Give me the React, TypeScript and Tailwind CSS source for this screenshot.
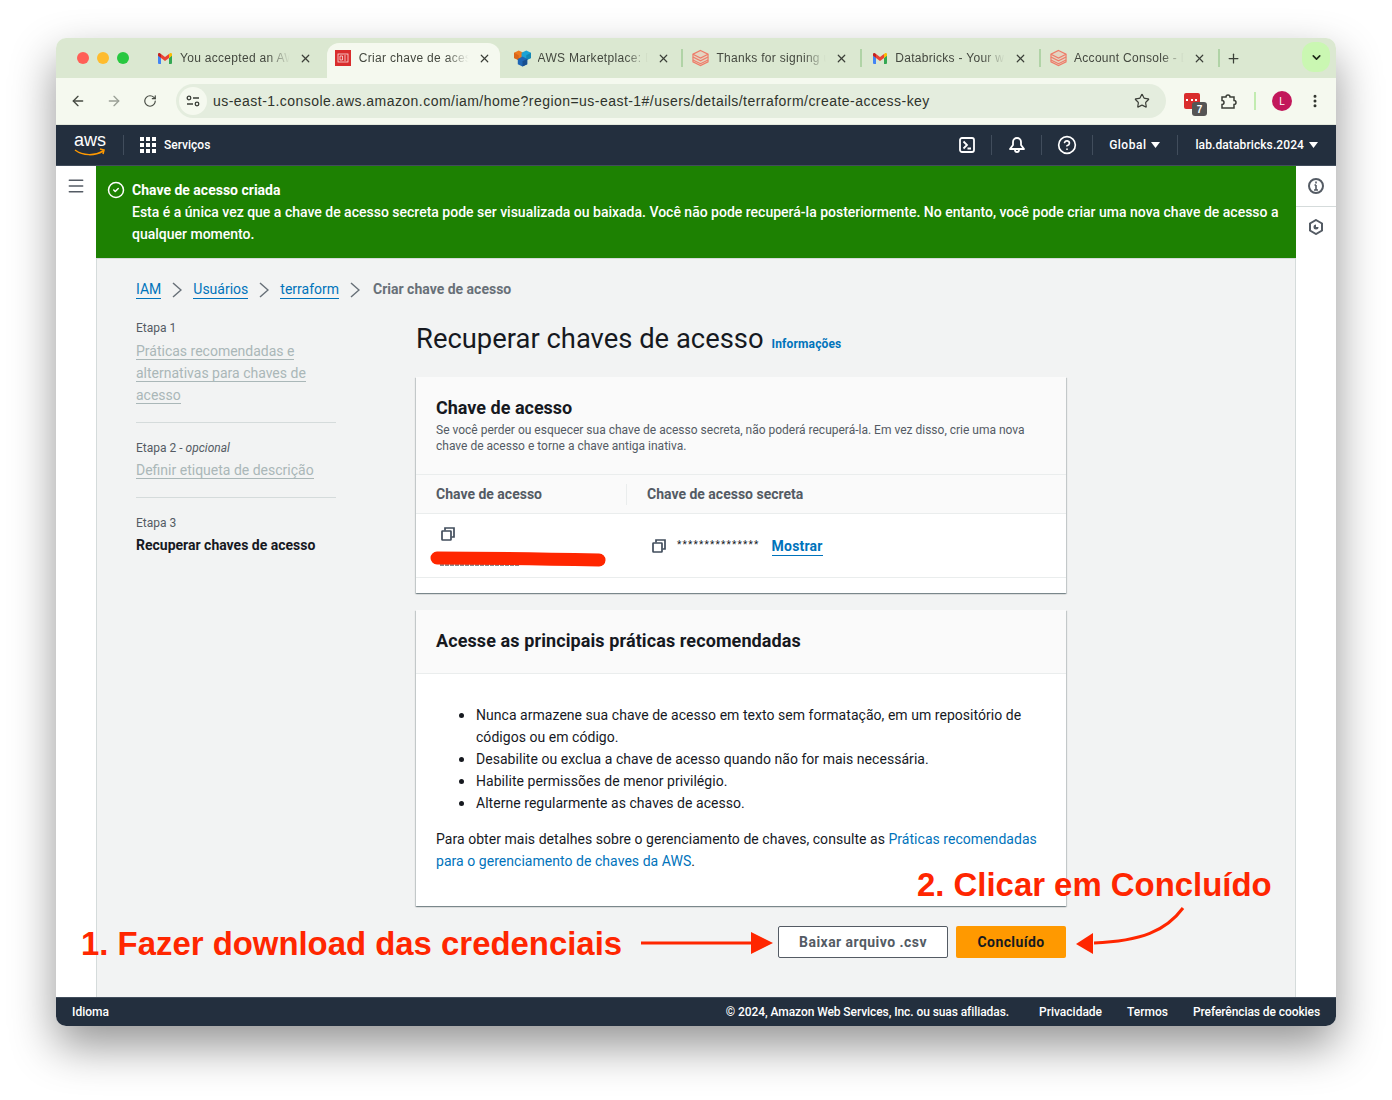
import React from 'react';
import { ArrowLeft, ArrowRight, RotateCw, Star, MoreVertical, X, Plus, ChevronDown, CircleHelp, CircleCheck, Menu } from 'lucide-react';

const GmailIcon = () => (
  <svg width="14" height="11" viewBox="0 0 14 11">
    <path d="M0 2v8a1 1 0 0 0 1 1h2V5z" fill="#4285f4" />
    <path d="M14 2v8a1 1 0 0 1-1 1h-2V5z" fill="#34a853" />
    <path d="M11 1v4l3-2.3V1.300C14 .3 12.800-.3 12 .3z" fill="#fbbc04" />
    <path d="M3 5V1l4 3 4-3v4L7 8z" fill="#ea4335" />
    <path d="M0 1.300v1.400L3 5V1L2 .3C1.200-.3 0 .3 0 1.300z" fill="#c5221f" />
  </svg>
);

const ConsoleIcon = () => (
  <svg width="16" height="16" viewBox="0 0 16 16">
    <rect width="16" height="16" fill="#d92d2d" />
    <rect x="3" y="4" width="10" height="8" fill="none" stroke="#fff" strokeWidth="0.8" opacity="0.85" />
    <path d="M5 6h2.500v4H5zM9 6h2M9 8h2M9 10h2" fill="none" stroke="#fff" strokeWidth="0.8" opacity="0.85" />
  </svg>
);

const MarketplaceIcon = () => (
  <svg width="18" height="18" viewBox="0 0 18 18">
    <path d="M0 3.500L5 1l5 2.500v5.500L5 11.500 0 9z" fill="#ee7a20" />
    <path d="M5 6v5.500L0 9V3.500z" fill="#d9651a" />
    <path d="M8 3.500L13 1l5 2.500v5.500l-5 2.500L8 9z" fill="#1ba3d6" />
    <path d="M13 6v5.500L18 9V3.500z" fill="#1487b5" />
    <path d="M4 10l5-2.500 5 2.500v5.500L9 18l-5-2.500z" fill="#1f66b5" />
    <path d="M9 12.500V18l5-2.500V10z" fill="#184f90" />
  </svg>
);

const StackIcon = () => (
  <svg width="18" height="18" viewBox="0 0 18 18" fill="none" stroke="#ee7b68" strokeWidth="1.200">
    <path d="M9 1l8 4v8l-8 4-8-4V5z" fill="#f6b3a5" fillOpacity="0.35" />
    <path d="M1 5l8 4 8-4" />
    <path d="M1 8l8 4 8-4" />
    <path d="M1 11l8 4 8-4" />
  </svg>
);

const CopyIcon = () => (
  <svg width="14" height="14" viewBox="0 0 14 14" fill="none" stroke="#414d5c" strokeWidth="1.700">
    <rect x="1" y="4" width="9" height="9" rx="0.5" />
    <path d="M4 3.500V1h9v9h-2.500" />
  </svg>
);

const CloudShell = () => (
  <svg width="16" height="16" viewBox="0 0 16 16" fill="none" stroke="#fff" strokeWidth="1.800">
    <rect x="1" y="1" width="14" height="14" rx="2" />
    <path d="M4.500 4.500L8 8l-3.500 3.500M8.500 11.500H12" />
  </svg>
);

const BellIcon = () => (
  <svg width="16" height="16" viewBox="0 0 16 16" fill="none" stroke="#fff" strokeWidth="1.800">
    <path d="M1 12h14L12 8V5a4 4 0 0 0-8 0v3z" strokeLinejoin="round" />
    <path d="M6 12.500v.5a2 2 0 0 0 4 0v-.5" />
  </svg>
);

const tabs = [
  { title: 'You accepted an AWS', icon: <GmailIcon /> },
  { title: 'Criar chave de acesso', icon: <ConsoleIcon />, active: true },
  { title: 'AWS Marketplace: Databricks', icon: <MarketplaceIcon /> },
  { title: 'Thanks for signing up', icon: <StackIcon />, sep: true },
  { title: 'Databricks - Your workspace', icon: <GmailIcon />, sep: true },
  { title: 'Account Console - Databricks', icon: <StackIcon />, sep: true },
];

const Tab = ({ title, icon, active, sep }: { title: string; icon: React.ReactNode; active?: boolean; sep?: boolean }) => (
  <div className="relative flex h-[35px] w-[178.8px] items-center pb-[5px]">
    {sep && <div className="absolute left-[-2px] top-[6px] h-[18px] w-[2px] bg-[#b0d3a6]" />}
    {active && <div className="absolute left-[1px] top-0 h-[35px] w-[173px] rounded-t-xl bg-[#f5f9ef]" />}
    <div className="relative ml-[9px] flex w-[17px] justify-center">{icon}</div>
    <span className="relative ml-[7px] w-[112px] overflow-hidden whitespace-nowrap text-[12px] tracking-[0.3px] text-[#44483f] [mask-image:linear-gradient(to_right,black_78%,transparent_98%)]">
      {title}
    </span>
    <X size={13} strokeWidth={2.2} className="relative ml-[7px] text-[#3b3f38]" />
  </div>
);

const Crumb = ({ children }: { children: React.ReactNode }) => (
  <a className="border-b border-[#0073bb] text-[14px] leading-[18px] text-[#0073bb]">{children}</a>
);

const Chevron = () => (
  <svg width="10" height="16" viewBox="0 0 10 16" fill="none" stroke="#687078" strokeWidth="1.500" className="mx-[11px]">
    <path d="M1 1l8 7-8 7" />
  </svg>
);

const Divider = () => <div className="h-[20px] w-px bg-[#414d5c]" />;

const Caret = () => (
  <svg width="9" height="6" viewBox="0 0 9 6" fill="#fff">
    <path d="M0 0h9L4.500 6z" />
  </svg>
);

const Bullet = ({ children }: { children: React.ReactNode }) => (
  <li className="relative before:absolute before:left-[-17px] before:top-[9px] before:h-[5px] before:w-[5px] before:rounded-full before:bg-[#16191f]">
    {children}
  </li>
);

const Annotations = () => (
  <>
    <span className="absolute left-[25px] top-[886px] whitespace-nowrap font-['Liberation_Sans'] text-[32.9px] font-bold leading-[40px] text-[#ff2600]">
      1. Fazer download das credenciais
    </span>
    <span className="absolute left-[861px] top-[827px] whitespace-nowrap font-['Liberation_Sans'] text-[32.9px] font-bold leading-[40px] text-[#ff2600]">
      2. Clicar em Concluído
    </span>
    <svg className="absolute left-[580px] top-[865px]" width="560" height="60" viewBox="0 0 560 60" fill="none">
      <path d="M5 40H120" stroke="#ff2600" strokeWidth="3" />
      <path d="M137 40L115 29v22z" fill="#ff2600" />
      <path d="M547 5C530 28 505 38 458 40" stroke="#ff2600" strokeWidth="3" />
      <path d="M440 41l17-11v21z" fill="#ff2600" />
    </svg>
  </>
);

export default function App() {
  return (
    <div className="h-[1100px] w-[1392px] bg-white pl-[56px] pt-[38px] font-['Roboto',sans-serif]">
      <div className="relative flex h-[988px] w-[1280px] flex-col overflow-visible rounded-[10px] shadow-[0_20px_45px_rgba(0,0,0,0.42)]">
        {/* tab strip */}
        <div className="flex h-[40px] items-end rounded-t-[10px] bg-[#dbe8d1] font-['Liberation_Sans',sans-serif]">
          <div className="flex h-[40px] w-[91px] items-center gap-[8px] pl-[21px]">
            <span className="h-[12px] w-[12px] rounded-full bg-[#ff5f57]" />
            <span className="h-[12px] w-[12px] rounded-full bg-[#febc2e]" />
            <span className="h-[12px] w-[12px] rounded-full bg-[#28c840]" />
          </div>
          {tabs.map((t) => (
            <Tab key={t.title} {...t} />
          ))}
          <div className="relative flex h-[35px] flex-1 items-center pb-[5px]">
            <div className="absolute left-[-2px] top-[6px] h-[18px] w-[2px] bg-[#b0d3a6]" />
            <Plus size={15} strokeWidth={2} className="ml-[6px] text-[#3b3f38]" />
            <div className="absolute right-[6px] top-[-1px] flex h-[30px] w-[28px] items-center justify-center rounded-[12px] bg-[#caf7b2]">
              <ChevronDown size={13} strokeWidth={3} className="text-[#1e2a18]" />
            </div>
          </div>
        </div>
        {/* toolbar */}
        <div className="flex h-[47px] items-center border-b border-[#e3e8dc] bg-[#f5f9ef] font-['Liberation_Sans',sans-serif]">
          <ArrowLeft size={16} strokeWidth={2} className="ml-[14px] text-[#454a42]" />
          <ArrowRight size={16} strokeWidth={2} className="ml-[20px] text-[#9aa096]" />
          <RotateCw size={14} strokeWidth={2} className="ml-[21px] text-[#454a42]" />
          <div className="ml-[19px] flex h-[34px] w-[990px] items-center rounded-full bg-[#e4edde] pr-[16px]">
            <div className="ml-[3px] flex h-[28px] w-[28px] items-center justify-center rounded-full bg-[#f5f9ef]">
              <svg width="14" height="12" viewBox="0 0 14 12" fill="none" stroke="#3b3f38" strokeWidth="1.300">
                <circle cx="3" cy="3" r="1.800" />
                <path d="M7 3h6M1 9h6" />
                <circle cx="11" cy="9" r="1.800" />
              </svg>
            </div>
            <span className="ml-[6px] flex-1 whitespace-nowrap text-[14px] tracking-[0.46px] text-[#2f332c]">
              us-east-1.console.aws.amazon.com/iam/home?region=us-east-1#/users/details/terraform/create-access-key
            </span>
            <Star size={16} strokeWidth={1.8} className="text-[#3b3f38]" />
          </div>
          <div className="relative ml-[18px] h-[16px] w-[16px] rounded-[2px] bg-[#d92d2d]">
            <span className="absolute left-[2px] top-[6px] h-[2px] w-[11px] border-t-2 border-dotted border-white" />
            <span className="absolute left-[8px] top-[9px] flex h-[14px] w-[15px] items-center justify-center rounded-[3px] bg-[#555] text-[10px] font-bold text-white">
              7
            </span>
          </div>
          <svg className="ml-[20px]" width="17" height="17" viewBox="0 0 17 17" fill="none" stroke="#3b3f38" strokeWidth="1.500">
            <path d="M2 4h4a2 2 0 0 1 4 0h4v3.500a2 2 0 0 1 0 4V15H2v-3.500a2 2 0 0 0 0-4z" />
          </svg>
          <div className="ml-[17px] h-[18px] w-[2px] bg-[#c2ecb0]" />
          <div className="ml-[16px] flex h-[20px] w-[20px] items-center justify-center rounded-full bg-[#c2185b] text-[10px] text-white">L</div>
          <MoreVertical size={16} strokeWidth={2.5} className="ml-[15px] text-[#2f332c]" />
        </div>
        {/* aws nav */}
        <div className="flex h-[41px] items-center border-b border-[#414d5c] bg-[#232f3e] text-[12px] font-medium text-white">
          <div className="relative ml-[18px] flex h-[28px] w-[32px] justify-center">
            <span className="font-['Liberation_Sans'] text-[18px] leading-[18px]">aws</span>
            <svg className="absolute left-0 top-[17px]" width="32" height="9" viewBox="0 0 32 9" fill="none" stroke="#ff9900" strokeWidth="1.500">
              <path d="M1 2c8 6 20 6 28 1M26 1l4 1-1 4" />
            </svg>
          </div>
          <div className="ml-[17px] h-[20px] w-px bg-[#414d5c]" />
          <div className="ml-[16px] grid grid-cols-3 gap-[2px]">
            {Array.from({ length: 9 }).map((_, i) => (
              <span key={i} className="h-[4px] w-[4px] bg-white" />
            ))}
          </div>
          <span className="ml-[8px]">Serviços</span>
          <div className="ml-auto flex items-center">
            <CloudShell />
            <div className="ml-[16px] mr-[17px]"><Divider /></div>
            <BellIcon />
            <div className="ml-[16px] mr-[15px]"><Divider /></div>
            <CircleHelp size={20} strokeWidth={2} />
            <div className="ml-[15px] mr-[16px]"><Divider /></div>
            <span className="tracking-[0.5px]">Global</span>
            <span className="ml-[5px]"><Caret /></span>
            <div className="mx-[17px]"><Divider /></div>
            <span className="tracking-[0.1px]">lab.databricks.2024</span>
            <span className="ml-[5px] mr-[18px]"><Caret /></span>
          </div>
        </div>
        {/* body */}
        <div className="flex h-[831px] bg-white text-[14px] text-[#16191f]">
          <div className="flex w-[40px] justify-center pt-[10px]">
            <Menu size={20} strokeWidth={1.800} className="text-[#545b64]" />
          </div>
          <div className="flex w-[1200px] flex-col border-x border-[#d5dbdb] bg-[#f2f3f3]">
            <div className="-mx-px flex h-[93px] gap-[7px] border-b border-[#d5dbdb] bg-[#1d8102] pl-[11px] pr-[12px] pt-[13px] font-medium leading-[22px] text-white">
              <CircleCheck size={18} strokeWidth={2} className="mt-[2px] shrink-0" />
              <div className="w-[1160px]">
                <p className="font-bold">Chave de acesso criada</p>
                <p>
                  Esta é a única vez que a chave de acesso secreta pode ser visualizada ou baixada. Você não pode recuperá-la posteriormente. No entanto, você pode criar uma nova chave de acesso a qualquer momento.
                </p>
              </div>
            </div>
            <div className="flex items-center pl-[39px] pt-[20px]">
              <Crumb>IAM</Crumb>
              <Chevron />
              <Crumb>Usuários</Crumb>
              <Chevron />
              <Crumb>terraform</Crumb>
              <Chevron />
              <span className="ml-[2px] font-bold text-[#687078]">Criar chave de acesso</span>
            </div>
            <div className="flex pl-[39px] pt-[19px]">
              {/* wizard steps */}
              <div className="w-[200px] shrink-0 pt-[1px]">
                <p className="text-[12px] leading-[16px] text-[#545b64]">Etapa 1</p>
                <p className="mt-[4px] leading-[22px] text-[#aab7b8]">
                  <span className="border-b border-[#aab7b8]">Práticas recomendadas e</span><br />
                  <span className="border-b border-[#aab7b8]">alternativas para chaves de</span><br />
                  <span className="border-b border-[#aab7b8]">acesso</span>
                </p>
                <div className="mt-[16px] border-t border-[#d5dbdb] pt-[17px]">
                  <p className="text-[12px] leading-[16px] text-[#545b64]">Etapa 2 - <i>opcional</i></p>
                  <p className="mt-[3px] leading-[22px] text-[#aab7b8]">
                    <span className="border-b border-[#aab7b8]">Definir etiqueta de descrição</span>
                  </p>
                </div>
                <div className="mt-[16px] border-t border-[#d5dbdb] pt-[17px]">
                  <p className="text-[12px] leading-[16px] text-[#545b64]">Etapa 3</p>
                  <p className="mt-[3px] font-bold leading-[22px]">Recuperar chaves de acesso</p>
                </div>
              </div>
              <div className="ml-[80px] w-[650px] pt-[3px]">
                <div className="flex items-baseline gap-[8px]">
                  <h1 className="text-[27.4px] font-normal leading-[34px]">Recuperar chaves de acesso</h1>
                  <span className="text-[12px] font-bold tracking-[0.15px] text-[#0073bb]">Informações</span>
                </div>
                {/* access key card */}
                <section className="mt-[21px] h-[216px] bg-white shadow-[0_1px_1px_0_rgba(0,28,36,0.3),1px_1px_1px_0_rgba(0,28,36,0.15),-1px_1px_1px_0_rgba(0,28,36,0.15)]">
                  <div className="h-[98px] border-b border-[#eaeded] bg-[#fafafa] px-[20px] pt-[20px]">
                    <h2 className="text-[18px] font-bold leading-[22px]">Chave de acesso</h2>
                    <p className="mt-[3px] text-[12px] leading-[16px] text-[#545b64]">
                      Se você perder ou esquecer sua chave de acesso secreta, não poderá recuperá-la. Em vez disso, crie uma nova chave de acesso e torne a chave antiga inativa.
                    </p>
                  </div>
                  <div className="flex h-[39px] items-center border-b border-[#eaeded] bg-[#fafafa] font-bold text-[#545b64]">
                    <span className="w-[211px] border-r border-[#eaeded] pl-[20px]">Chave de acesso</span>
                    <span className="pl-[20px]">Chave de acesso secreta</span>
                  </div>
                  <div className="relative flex h-[64px] border-b border-[#eaeded]">
                    <div className="w-[211px] pl-[25px] pt-[13px]"><CopyIcon /></div>
                    <div className="flex items-center pl-[25px]">
                      <CopyIcon />
                      <span className="ml-[11px] text-[10px] tracking-[1.2px] -translate-y-px">***************</span>
                      <a className="ml-[12px] mt-[2px] border-b border-[#0073bb] font-bold leading-[18px] tracking-[0.2px] text-[#0073bb]">Mostrar</a>
                    </div>
                    {/* scribble hiding the key */}
                    <svg className="absolute left-[14px] top-[35px]" width="178" height="18" viewBox="0 0 178 18">
                      <path d="M10 16H90" stroke="#16191f" strokeWidth="1" strokeDasharray="4 1" fill="none" />
                      <path d="M169 5.500a5.500 5.500 0 0 1 0 11" stroke="#16191f" strokeWidth="1.200" fill="none" />
                      <path d="M7 9C60 9 120 10 169 11" stroke="#ff2600" strokeWidth="13" strokeLinecap="round" fill="none" />
                    </svg>
                  </div>
                </section>
                {/* best practices card */}
                <section className="mt-[17px] h-[296px] bg-white shadow-[0_1px_1px_0_rgba(0,28,36,0.3),1px_1px_1px_0_rgba(0,28,36,0.15),-1px_1px_1px_0_rgba(0,28,36,0.15)]">
                  <div className="flex h-[64px] items-center border-b border-[#eaeded] bg-[#fafafa] px-[20px] pb-[2px]">
                    <h2 className="text-[18px] font-bold leading-[22px] tracking-[0.1px]">Acesse as principais práticas recomendadas</h2>
                  </div>
                  <div className="px-[20px] pt-[30px] leading-[22px] tracking-[0.04px]">
                    <ul className="pl-[40px]">
                      <Bullet>Nunca armazene sua chave de acesso em texto sem formatação, em um repositório de códigos ou em código.</Bullet>
                      <Bullet>Desabilite ou exclua a chave de acesso quando não for mais necessária.</Bullet>
                      <Bullet>Habilite permissões de menor privilégio.</Bullet>
                      <Bullet>Alterne regularmente as chaves de acesso.</Bullet>
                    </ul>
                    <p className="mt-[14px]">
                      Para obter mais detalhes sobre o gerenciamento de chaves, consulte as <a className="text-[#0073bb]">Práticas recomendadas para o gerenciamento de chaves da AWS</a>.
                    </p>
                  </div>
                </section>
                <div className="mt-[20px] flex justify-end gap-[8px] font-bold">
                  <button className="h-[32px] w-[170px] rounded-[2px] border border-[#545b64] bg-white tracking-[0.45px] text-[#545b64]">Baixar arquivo .csv</button>
                  <button className="h-[32px] w-[110px] rounded-[2px] bg-[#ff9900] tracking-[0.4px] text-[#16191f]">Concluído</button>
                </div>
              </div>
            </div>
          </div>
          <div className="w-[40px]">
            <div className="flex h-[41px] items-center justify-center border-b border-[#d5dbdb]">
              <svg width="16" height="16" viewBox="0 0 16 16" fill="none" stroke="#545b64" strokeWidth="2">
                <circle cx="8" cy="8" r="7" />
                <path d="M8 7v5M6.500 7H8M6 12h4M8 3.500v2" strokeWidth="1.600" />
              </svg>
            </div>
            <div className="flex h-[39px] items-center justify-center">
              <svg width="14" height="16" viewBox="0 0 14 16" fill="none" stroke="#545b64" strokeWidth="2">
                <path d="M7 1l6 3.500v7L7 15l-6-3.500v-7z" />
                <path d="M7 5.500a2.500 2.500 0 1 0 2.500 2.500H7z" fill="#545b64" stroke="none" />
              </svg>
            </div>
          </div>
        </div>
        {/* footer */}
        <div className="flex h-[29px] items-center rounded-b-[10px] border-t border-[#414d5c] bg-[#232f3e] px-[16px] text-[12px] font-medium text-white">
          <span>Idioma</span>
          <div className="ml-auto flex">
            <span className="tracking-[-0.08px]">© 2024, Amazon Web Services, Inc. ou suas afiliadas.</span>
            <span className="ml-[30px]">Privacidade</span>
            <span className="ml-[25px]">Termos</span>
            <span className="ml-[25px] tracking-[-0.08px]">Preferências de cookies</span>
          </div>
        </div>
        <Annotations />
      </div>
    </div>
  );
}
